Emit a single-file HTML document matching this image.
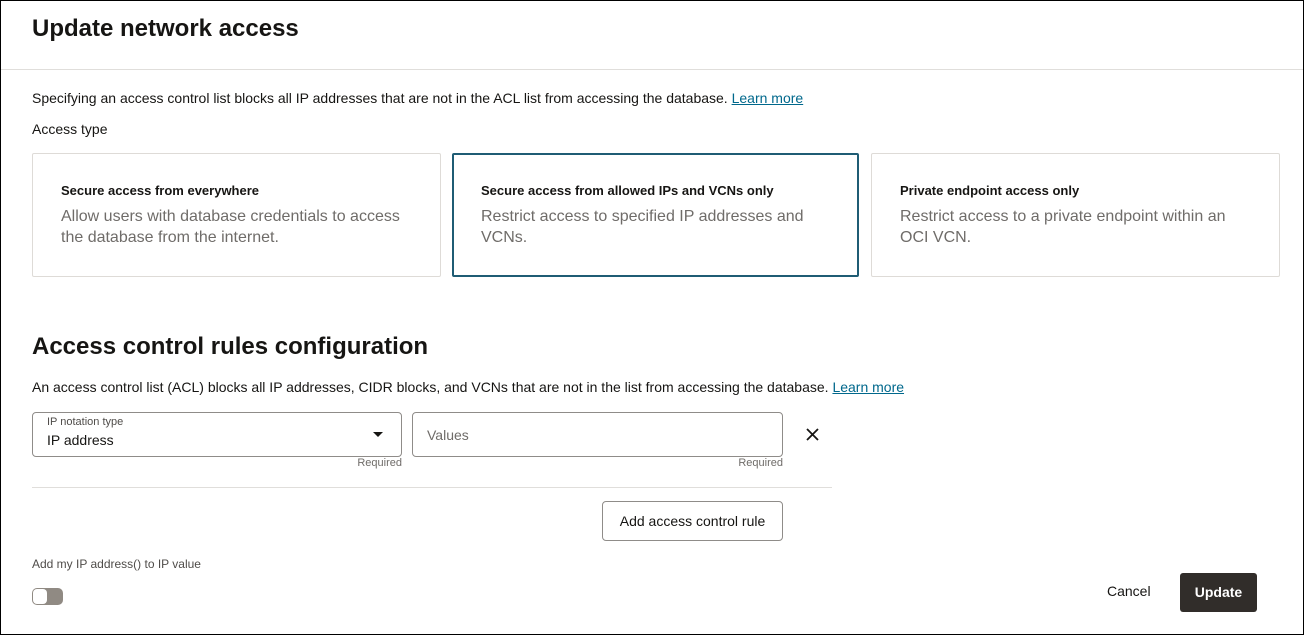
<!DOCTYPE html>
<html><head><meta charset="utf-8"><style>
*{box-sizing:border-box;margin:0;padding:0}
body{width:1304px;height:635px;background:#fff;font-family:"Liberation Sans",sans-serif;color:#161513;position:relative;overflow:hidden}
.frame{position:absolute;left:0;top:0;width:1304px;height:635px;border:1px solid #000}
.abs{position:absolute}
h1{position:absolute;left:32px;top:15px;font-size:24px;font-weight:bold}
.hr{position:absolute;left:1px;right:1px;top:69px;height:1px;background:#e0dedb}
.p{font-size:14px}
a{color:#00688c;text-decoration:underline}
.card{position:absolute;top:153px;height:124px;border:1px solid #dedbd7;border-radius:2px;padding:29px 0 0 28px}
.card.sel{border:2px solid #1f5c74;padding:28px 0 0 27px}
.card b{display:block;font-size:13px;margin-bottom:8px}
.card span{display:block;font-size:16px;color:#6f6c69;line-height:21px;width:350px}
h2{position:absolute;left:32px;top:333px;font-size:24px;font-weight:bold}
.field{position:absolute;top:412px;height:45px;border:1px solid #8f8c89;border-radius:4px}
.req{position:absolute;top:457px;font-size:11px;color:#6f6c69;text-align:right;width:80px}
</style></head><body>
<div class="frame"></div>
<h1>Update network access</h1>
<div class="hr"></div>
<div class="abs p" style="left:32px;top:90px">Specifying an access control list blocks all IP addresses that are not in the ACL list from accessing the database. <a>Learn more</a></div>
<div class="abs p" style="left:32px;top:121px">Access type</div>
<div class="card" style="left:32px;width:409px"><b>Secure access from everywhere</b><span>Allow users with database credentials to access the database from the internet.</span></div>
<div class="card sel" style="left:452px;width:407px"><b>Secure access from allowed IPs and VCNs only</b><span>Restrict access to specified IP addresses and VCNs.</span></div>
<div class="card" style="left:871px;width:409px"><b>Private endpoint access only</b><span>Restrict access to a private endpoint within an OCI VCN.</span></div>
<h2>Access control rules configuration</h2>
<div class="abs p" style="left:32px;top:379px">An access control list (ACL) blocks all IP addresses, CIDR blocks, and VCNs that are not in the list from accessing the database. <a>Learn more</a></div>
<div class="field" style="left:32px;width:370px">
 <div class="abs" style="left:14px;top:3px;font-size:11px;color:#4f4c49">IP notation type</div>
 <div class="abs" style="left:14px;top:19px;font-size:14px">IP address</div>
 <div class="abs" style="left:340px;top:19px;width:0;height:0;border-left:5px solid transparent;border-right:5px solid transparent;border-top:5px solid #161513"></div>
</div>
<div class="req" style="left:322px">Required</div>
<div class="field" style="left:412px;width:371px"><div class="abs" style="left:14px;top:14px;font-size:14px;color:#6f6c69">Values</div></div>
<div class="req" style="left:703px">Required</div>
<svg class="abs" style="left:806px;top:428px" width="13" height="13" viewBox="0 0 13 13"><path d="M1 1L12 12M12 1L1 12" stroke="#161513" stroke-width="1.8"/></svg>
<div class="abs" style="left:32px;top:487px;width:800px;height:1px;background:#e0dedb"></div>
<div class="abs" style="left:602px;top:501px;width:181px;height:40px;border:1px solid #8f8c89;border-radius:4px;font-size:14px;text-align:center;line-height:38px">Add access control rule</div>
<div class="abs" style="left:32px;top:557px;font-size:12px;color:#4f4c49">Add my IP address() to IP value</div>
<div class="abs" style="left:32px;top:588px;width:31px;height:17px;border-radius:5px;background:#908a83"><div class="abs" style="left:1px;top:1px;width:14px;height:15px;border-radius:4px;background:#fff"></div></div>
<div class="abs" style="left:1107px;top:583px;font-size:14px">Cancel</div>
<div class="abs" style="left:1180px;top:573px;width:77px;height:39px;background:#312d2a;border-radius:3px;color:#fff;font-size:14px;font-weight:bold;text-align:center;line-height:38px">Update</div>
</body></html>
